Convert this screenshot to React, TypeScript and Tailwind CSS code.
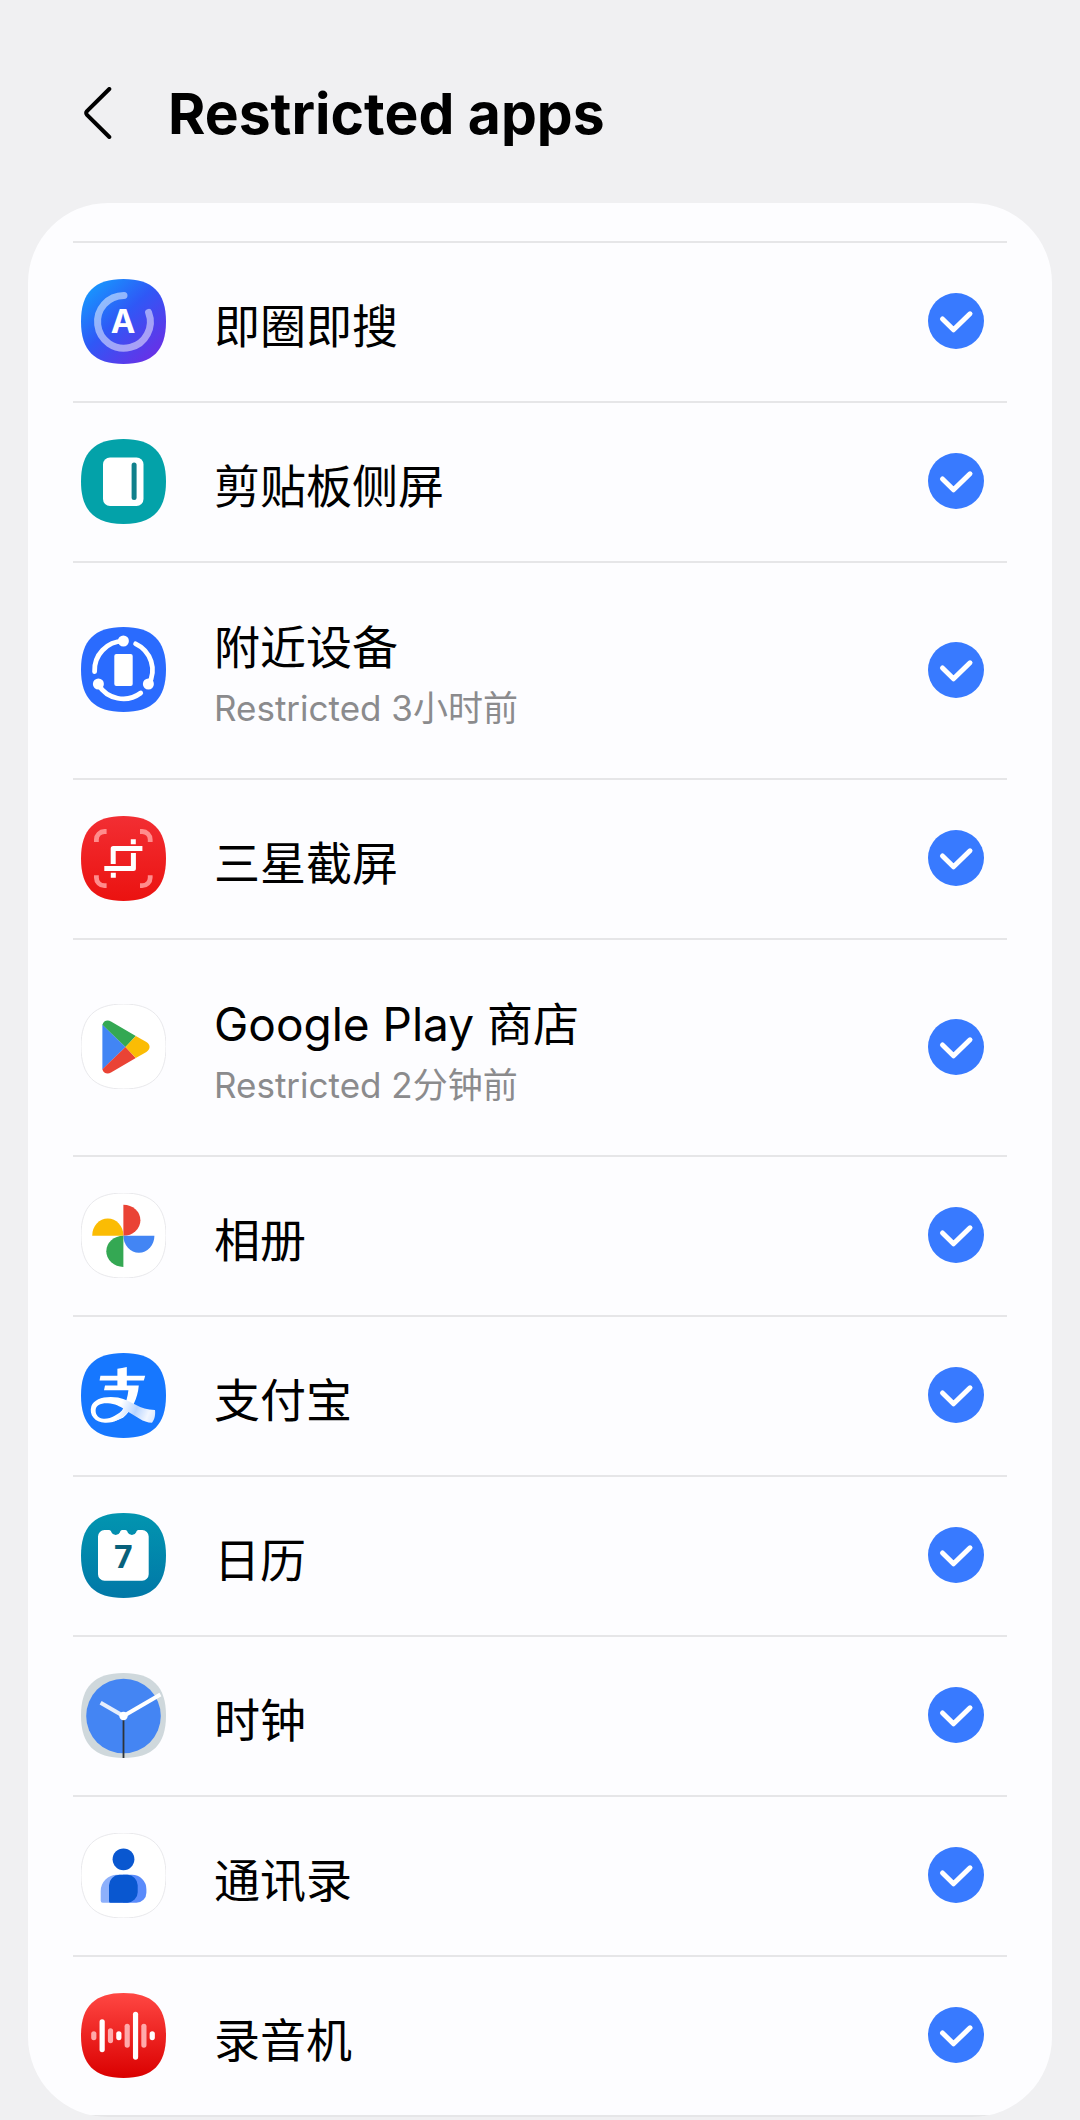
import clsx from "clsx";
import { ReactNode, useState } from "react";

const SQUIRCLE = "M42.5 0C71.5 0 85 13.5 85 42.5S71.5 85 42.5 85 0 71.5 0 42.5 13.5 0 42.5 0Z";

interface IconTileProps {
   fill: string;
   outlined?: boolean;
   children: ReactNode;
}

function IconTile(props: IconTileProps) {
   const { fill, outlined, children } = props;

   return (
      <svg className="size-[85px] shrink-0" viewBox="0 0 85 85" fill="none" aria-hidden="true">
         <path d={SQUIRCLE} fill={fill} stroke={outlined ? "#e9e9ec" : "none"} strokeWidth="1" />
         {children}
      </svg>
   );
}

function CircleSearchIcon() {
   return (
      <IconTile fill="url(#circle-search)">
         <defs>
            <linearGradient id="circle-search" x1="8" y1="8" x2="74" y2="80" gradientUnits="userSpaceOnUse">
               <stop stopColor="#1797fe" />
               <stop offset="0.45" stopColor="#2f58f6" />
               <stop offset="1" stopColor="#6a2fe6" />
            </linearGradient>
         </defs>
         <path d="M43 16.4A26.4 26.4 0 1 0 67.6 33.4" stroke="#fff" strokeOpacity="0.5" strokeWidth="7" strokeLinecap="round" />
         <text x="42" y="54" textAnchor="middle" className="fill-white font-['Inter',sans-serif] text-[33px] font-bold">A</text>
      </IconTile>
   );
}

function ClipboardEdgeIcon() {
   return (
      <IconTile fill="#03a2a9">
         <rect x="22" y="18.5" width="40.5" height="48.5" rx="7" fill="#fff" />
         <rect x="50.6" y="23.6" width="5" height="37.4" rx="2.5" fill="#10808b" />
      </IconTile>
   );
}

function NearbyIcon() {
   return (
      <IconTile fill="#2a6bfe">
         <rect x="33.3" y="27" width="18.4" height="32" rx="2" fill="#fff" />
         <g stroke="#fff" strokeWidth="4.8" strokeLinecap="round">
            <path d="M42.4 14.2A29 29 0 0 0 13.6 44.6" />
            <path d="M54.7 16.8A29 29 0 0 1 67.6 57.5" />
            <path d="M17.3 57.5A29 29 0 0 0 59.7 66" />
         </g>
         <circle cx="42.4" cy="14" r="5.5" fill="#fff" />
         <circle cx="67.4" cy="57" r="5.5" fill="#fff" />
         <circle cx="17.4" cy="57" r="5.5" fill="#fff" />
      </IconTile>
   );
}

function CaptureIcon() {
   return (
      <IconTile fill="url(#capture)">
         <defs>
            <linearGradient id="capture" x1="0" y1="0" x2="0" y2="1">
               <stop stopColor="#f22e33" />
               <stop offset="1" stopColor="#eb1210" />
            </linearGradient>
         </defs>
         <g stroke="#ff8c8c" strokeWidth="4.8">
            <path d="M15.4 26v-2.5a8 8 0 0 1 8-8h2.2" />
            <path d="M59 15.5h2.2a8 8 0 0 1 8 8V26" />
            <path d="M69.2 59.3v2.4a8 8 0 0 1-8 8H59" />
            <path d="M25.6 69.7h-2.2a8 8 0 0 1-8-8v-2.4" />
         </g>
         <g stroke="#fff" strokeWidth="5" strokeLinejoin="round">
            <path d="M32.2 48V32.4H61.4" />
            <path d="M52.4 37V52.4H23.3" />
         </g>
         <path d="M49.8 23.3h5v5h-5zM29.8 56.7h5v5h-5z" fill="#fff" />
      </IconTile>
   );
}

function PlayStoreIcon() {
   return (
      <IconTile fill="#fff" outlined>
         <path d="M21.4 20.5V65.5L44.5 43Z" fill="#4285f4" />
         <path d="M21.4 20.8C22.4 16.6 26.6 15.4 30 17.4L54.8 31.9 44.5 43Z" fill="#34a853" />
         <path d="M21.4 65.2C22.4 69.4 26.6 70.6 30 68.6L54.8 54.1 44.5 43Z" fill="#ea4335" />
         <path d="M54.8 31.9L65.4 38.1C69.6 40.6 69.6 45.4 65.4 47.9L54.8 54.1 44.5 43Z" fill="#fbbc04" />
      </IconTile>
   );
}

function PhotosIcon() {
   return (
      <IconTile fill="#fff" outlined>
         <path d="M42.4 11.7A17 15.5 0 0 1 42.4 42.7Z" fill="#ea4335" />
         <path d="M11.2 42.7A15.5 17 0 0 1 42.4 42.7Z" fill="#fbbc04" />
         <path d="M42.4 42.7H73.4A15.5 17 0 0 1 42.4 42.7Z" fill="#4285f4" />
         <path d="M42.4 42.7A17 15.5 0 0 0 42.4 73.9Z" fill="#34a853" />
      </IconTile>
   );
}

function AlipayIcon() {
   return (
      <IconTile fill="#1677ff">
         <defs>
            <linearGradient id="ribbon" x1="40" y1="50" x2="74" y2="64" gradientUnits="userSpaceOnUse">
               <stop stopColor="#fff" />
               <stop offset="0.45" stopColor="#b9d5ff" />
               <stop offset="0.8" stopColor="#f1f6ff" />
               <stop offset="1" stopColor="#d9e8ff" />
            </linearGradient>
         </defs>
         <path d="M36.4 15.8Q41 15 45.8 14V35H36.4Z" fill="#fff" />
         <path d="M19.4 22.8H64.2L62.8 27.4H18.6Z" fill="#fff" />
         <path d="M24 32.6H57.8C56.6 46 51 57 42 64.8L33 68.4C41 60 46 50 47.4 37.2H23Z" fill="#fff" />
         <path
            d="M74 57C58 57 52 48 37 44.6C24 42.6 13 46 10.4 53C7.6 62 14 69.4 24 69.8C34 70.2 42 65 47 58.8C55 63 62 69.8 71 69.8C74 66 74.5 61 74 57ZM14.6 57.4C14.6 52 20 49.8 27 50.2C34 50.6 39 53.4 43 55.8C37 61.6 30 66.2 22.6 65.8C17.6 65.4 14.6 62 14.6 57.4Z"
            fill="url(#ribbon)"
            fillRule="evenodd"
         />
      </IconTile>
   );
}

function CalendarIcon() {
   return (
      <IconTile fill="url(#calendar)">
         <defs>
            <linearGradient id="calendar" x1="0" y1="0" x2="0" y2="1">
               <stop stopColor="#0295b0" />
               <stop offset="1" stopColor="#0178a7" />
            </linearGradient>
         </defs>
         <path
            d="M23.5 17H28C29.6 17 30 18 30.4 19.2A4.7 4.7 0 0 0 39 19.2C39.4 18 39.8 17 41.2 17H44.2C45.8 17 46.2 18 46.6 19.2A4.7 4.7 0 0 0 55.2 19.2C55.6 18 56 17 57.4 17H61.2A6.5 6.5 0 0 1 67.7 23.5V61.2A6.5 6.5 0 0 1 61.2 67.7H23.5A6.5 6.5 0 0 1 17 61.2V23.5A6.5 6.5 0 0 1 23.5 17Z"
            fill="#fff"
         />
         <text x="42.5" y="54.7" textAnchor="middle" className="fill-[#08617b] font-['Open_Sans',sans-serif] text-[32px] font-bold">7</text>
      </IconTile>
   );
}

function ClockIcon() {
   return (
      <IconTile fill="#cfd8dc">
         <circle cx="42.5" cy="43" r="37.3" fill="#4485f3" />
         <path d="M42.5 43V85" stroke="#2e3338" strokeWidth="1.8" />
         <path d="M42.5 43L19.6 29.7" stroke="#e6eefc" strokeWidth="4" />
         <path d="M42.5 43L79.4 21.6" stroke="#fff" strokeWidth="4" />
         <circle cx="42.5" cy="43" r="4.2" fill="#fff" />
      </IconTile>
   );
}

function ContactsIcon() {
   return (
      <IconTile fill="#fff" outlined>
         <circle cx="42.5" cy="26.3" r="10.9" fill="#0957d0" />
         <path d="M36 41.8H48V69.7H21.7A2 2 0 0 1 19.7 67.7V58A16.2 16.2 0 0 1 36 41.8Z" fill="#8db0fb" />
         <path d="M42 41.8H51A14.4 14.4 0 0 1 65.4 56.2V59.7A10 10 0 0 1 55.4 69.7H42Z" fill="#5a8bfb" />
         <path d="M38.5 41.8H46.2A10.5 10.5 0 0 1 56.7 52.3V59.2A10.5 10.5 0 0 1 46.2 69.7H29.5A1.5 1.5 0 0 1 28 68.2V52.3A10.5 10.5 0 0 1 38.5 41.8Z" fill="#0957d0" />
      </IconTile>
   );
}

function RecorderIcon() {
   const bars = [9, 33, 15, 9, 24, 48, 24, 9];
   const faded = [0, 2, 4, 6];

   return (
      <IconTile fill="url(#recorder)">
         <defs>
            <linearGradient id="recorder" x1="0" y1="0" x2="0" y2="1">
               <stop stopColor="#ff4743" />
               <stop offset="1" stopColor="#da0000" />
            </linearGradient>
         </defs>
         {bars.map((height: number, i: number) => (
            <rect
               x={10.2 + i * 8.35}
               y={42.7 - height / 2}
               width="5.2"
               height={height}
               rx="2.6"
               fill={faded.includes(i) ? "#ffa9aa" : "#fff"}
               key={i}
            />
         ))}
      </IconTile>
   );
}

interface RestrictedApp {
   id: string;
   title: string;
   note?: string;
   icon: ReactNode;
}

const apps: RestrictedApp[] = [
   { id: "circle-to-search", title: "即圈即搜", icon: <CircleSearchIcon /> },
   { id: "clipboard-edge", title: "剪贴板侧屏", icon: <ClipboardEdgeIcon /> },
   { id: "nearby", title: "附近设备", note: "Restricted 3小时前", icon: <NearbyIcon /> },
   { id: "capture", title: "三星截屏", icon: <CaptureIcon /> },
   { id: "play-store", title: "Google Play 商店", note: "Restricted 2分钟前", icon: <PlayStoreIcon /> },
   { id: "photos", title: "相册", icon: <PhotosIcon /> },
   { id: "alipay", title: "支付宝", icon: <AlipayIcon /> },
   { id: "calendar", title: "日历", icon: <CalendarIcon /> },
   { id: "clock", title: "时钟", icon: <ClockIcon /> },
   { id: "contacts", title: "通讯录", icon: <ContactsIcon /> },
   { id: "recorder", title: "录音机", icon: <RecorderIcon /> }
];

interface AppRowProps {
   app: RestrictedApp;
   checked: boolean;
   onToggle: () => void;
}

function AppRow(props: AppRowProps) {
   const { app, checked, onToggle } = props;

   return (
      <li className="border-t-2 border-[#e6e6e8] last:border-b-2">
         <label
            htmlFor={app.id}
            className={clsx("flex items-center gap-12 pl-2 pr-[23px] pb-0.5 cursor-pointer", app.note ? "h-[215px]" : "h-[158px]")}
         >
            {app.icon}
            <span className="flex min-w-0 flex-1 flex-col pt-2.5">
               <span className="text-[46px] leading-[66px] text-black">{app.title}</span>
               {app.note && <span className="text-[35px] leading-[56px] text-[#8b8b8d]">{app.note}</span>}
            </span>
            <span className="grid size-14 shrink-0">
               <input
                  id={app.id}
                  type="checkbox"
                  checked={checked}
                  onChange={onToggle}
                  className="peer col-start-1 row-start-1 size-14 appearance-none rounded-full border-4 border-[#c4c4c8] checked:border-0 checked:bg-[#387aff]"
               />
               <svg
                  className="pointer-events-none invisible col-start-1 row-start-1 size-14 peer-checked:visible"
                  viewBox="0 0 56 56"
                  fill="none"
                  aria-hidden="true"
               >
                  <path d="M14.5 26L25.5 36.8 42 20.8" stroke="#fff" strokeWidth="5" strokeLinecap="round" strokeLinejoin="round" />
               </svg>
            </span>
         </label>
      </li>
   );
}

export default function App() {
   const [selected, setSelected] = useState<string[]>(apps.map((app) => app.id));

   const toggle = (id: string) => {
      setSelected((ids) => ids.includes(id) ? ids.filter((other) => other !== id) : [...ids, id]);
   };

   return (
      <main className="min-h-screen bg-[#f0f0f2] font-['Inter','Noto_Sans_CJK_SC',sans-serif]">
         <header className="flex items-center gap-14 pt-[78px] pb-[53px] pl-[84px]">
            <button type="button" aria-label="Back" className="cursor-pointer pb-0.5">
               <svg className="h-[52px] w-7" viewBox="0 0 28 52" fill="none" aria-hidden="true">
                  <path d="M25.3 2L3 24.2Q1.4 26 3 27.8L25.3 50" stroke="#000" strokeWidth="4" strokeLinecap="round" />
               </svg>
            </button>
            <h1 className="text-[57px] leading-[72px] font-bold text-black">Restricted apps</h1>
         </header>
         <section className="mx-7 overflow-hidden rounded-[80px] bg-[#fdfdff] px-[45px] pt-[38px]">
            <ul>
               {apps.map((app: RestrictedApp) => (
                  <AppRow
                     app={app}
                     checked={selected.includes(app.id)}
                     onToggle={() => toggle(app.id)}
                     key={app.id}
                  />
               ))}
            </ul>
         </section>
      </main>
   );
}
